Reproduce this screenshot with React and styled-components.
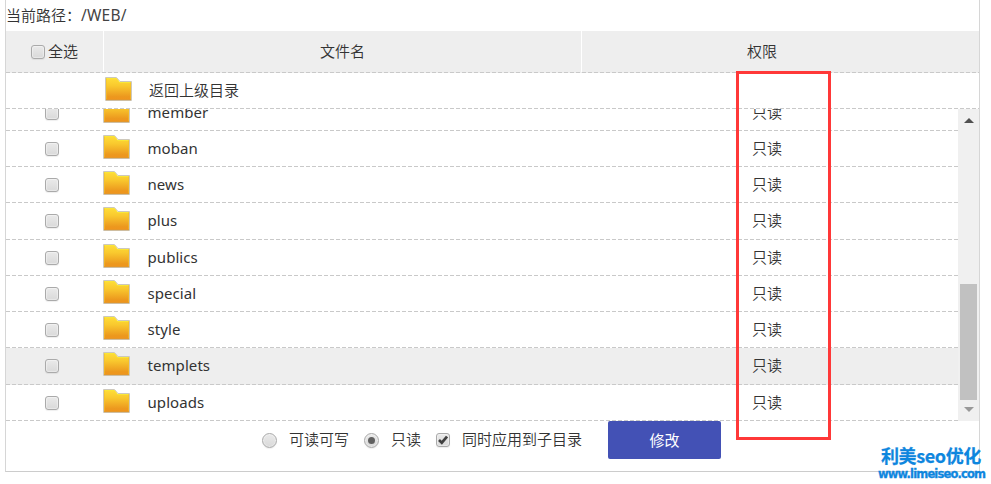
import React from "react";
import styled, { createGlobalStyle } from "styled-components";

const GlobalStyle = createGlobalStyle`
  * { box-sizing: border-box; }
  body {
    margin: 0;
    background: #fff;
    color: #333;
    font: 15px/20px "Noto Sans", "Noto Sans CJK SC", sans-serif;
    overflow: hidden;
  }
`;

const Page = styled.div`
  position: relative;
  width: 991px;
  height: 484px;
`;

const Panel = styled.main`
  display: flex;
  flex-direction: column;
  width: 975px;
  height: 472px;
  margin-left: 5px;
  border: solid #ccc;
  border-width: 0 1px 1px;
  border-left-color: #d6d6d6;
  border-right-color: #d6d6d6;
  font-weight: 350;
`;

const PathBar = styled.div`
  height: 31px;
  padding-top: 5px;
  white-space: nowrap;
`;

const PathValue = styled.span`
  font-size: 15.5px;
  font-weight: 400;
  color: #444;
  letter-spacing: 0.2px;
`;

const dashes = `
  background-image: repeating-linear-gradient(90deg, #c9c9c9 0 4px, transparent 4px 6px);
  background-size: 100% 1px;
  background-position: left bottom;
  background-repeat: no-repeat;
`;

const HeaderRow = styled.div`
  display: grid;
  grid-template-columns: 97px 1fr 398px;
  height: 42px;
  padding-bottom: 1px;
  background-color: #eee;
  ${dashes}
`;

const HeaderCell = styled.div`
  display: flex;
  align-items: center;
  justify-content: center;
  gap: 3px;
  padding-right: ${(p) => p.$pad || 0}px;
  & + & { border-left: 1px solid #fff; }
`;

const HeaderText = styled.span`
  padding-bottom: 2px;
`;

const ParentRow = styled.div`
  display: flex;
  height: 36px;
  padding: 4px 0 0 99px;
  ${dashes}
`;

const ListArea = styled.div`
  display: flex;
  height: 312px;
`;

const List = styled.div`
  display: flex;
  flex-direction: column;
  justify-content: flex-end;
  width: 952px;
  height: 312px;
  overflow: hidden;
`;

const FileRow = styled.div`
  display: grid;
  grid-template-columns: 39px 58px 44.5px 604.5px 1fr;
  flex: none;
  height: ${(p) => p.$height}px;
  padding-top: 4px;
  background-color: ${(p) => (p.$active ? "#eee" : "#fff")};
  ${dashes}
`;

const CheckSlot = styled.div`
  grid-column: 2;
  padding-top: 7px;
`;

const RowLabel = styled.span`
  display: block;
  padding-top: 3px;
  padding-left: ${(p) => p.$left || 0}px;
  font-weight: ${(p) => (p.$latin ? 400 : 350)};
  letter-spacing: ${(p) => (p.$latin ? 0.07 : 0)}px;
  white-space: nowrap;
`;

const CheckBox = styled.span`
  display: flex;
  align-items: center;
  justify-content: center;
  flex: none;
  width: 14px;
  height: 14px;
  border: 1px solid #aaa;
  border-radius: 3px;
  background: linear-gradient(#eaeaea, #d9d9d9);
  box-shadow: 0 1px 1px #0001, inset 0 0 1px 1px #fff6;
`;

const RadioButton = styled(CheckBox)`
  width: 15px;
  height: 15px;
  border-radius: 50%;
`;

const RadioDot = styled.span`
  width: 7px;
  height: 7px;
  border-radius: 50%;
  background: #606060;
`;

const ScrollTrack = styled.div`
  display: flex;
  flex-direction: column;
  justify-content: space-between;
  align-items: center;
  width: 21px;
  padding: 9px 0 9px;
  background: #f0f0f0;
`;

const ScrollThumb = styled.div`
  width: 17px;
  height: 116px;
  margin: auto 0 7px;
  background: #c1c1c1;
`;

const ArrowUp = styled.span`
  border: solid transparent;
  border-width: 0 5px 5px;
  border-bottom-color: #505050;
`;

const ArrowDown = styled.span`
  border: solid transparent;
  border-width: 5px 5px 0;
  border-top-color: #999;
`;

const Footer = styled.div`
  display: flex;
  height: 38px;
  padding-left: 256px;
`;

const Option = styled.label`
  display: flex;
  align-items: center;
  height: 38px;
  gap: 12px;
  margin-right: ${(p) => p.$after}px;
  white-space: nowrap;
`;

const OptionText = styled.span`
  padding-bottom: 2px;
`;

const SubmitButton = styled.button`
  width: 113px;
  height: 38px;
  padding: 0;
  border: 0;
  border-radius: 2px;
  background: #4351b5;
  color: #fff;
  font: inherit;
  font-weight: 400;
`;

const Highlight = styled.div`
  position: absolute;
  left: 736px;
  top: 71px;
  width: 95px;
  height: 369px;
  border: 3px solid #ff3838;
`;

const Watermark = styled.div`
  position: absolute;
  left: 878px;
  top: 444px;
  width: 109px;
  color: #0e86de;
  white-space: nowrap;
`;

const BrandName = styled.div`
  height: 23px;
  padding-left: 3px;
  font: 700 18px/23px "Noto Sans CJK SC", sans-serif;
  letter-spacing: -0.4px;
  -webkit-text-stroke: 0.25px #0e86de;
`;

const BrandUrl = styled.div`
  height: 14px;
  font: 700 11.5px/14px "DejaVu Sans", sans-serif;
  letter-spacing: -0.85px;
  -webkit-text-stroke: 0.3px #0e86de;
`;

function Folder() {
  return (
    <svg width="29" height="26" viewBox="0 0 29 26">
      <defs>
        <linearGradient id="folder" x1="0" y1="0" x2="0" y2="1">
          <stop offset="0" stopColor="#ffdd38" />
          <stop offset="0.35" stopColor="#f9c92e" />
          <stop offset="0.85" stopColor="#ec981e" />
          <stop offset="1" stopColor="#f0941d" />
        </linearGradient>
      </defs>
      <path d="M.5.5H11.5L15 4.5H26.5V23.5H.5Z" fill="none" stroke="#cdc8bc" />
      <path d="M1 1H11.3L14.8 5H26V23H1Z" fill="url(#folder)" />
      <path d="M1.5 22.5V1.5H11L14.5 5.5H25.5V22.5" fill="none" stroke="#f4c02a" strokeOpacity="0.6" />
      <path d="M1.5 1.5H11L14.5 5.5H25.5" fill="none" stroke="#f9e637" />
      <path d="M1 22.8H26" stroke="#d99a3a" strokeWidth="0.7" />
    </svg>
  );
}

const files = [
  { name: "member", height: 36 },
  { name: "moban", height: 36 },
  { name: "news", height: 36 },
  { name: "plus", height: 37 },
  { name: "publics", height: 36 },
  { name: "special", height: 36 },
  { name: "style", height: 36 },
  { name: "templets", height: 37, active: true },
  { name: "uploads", height: 36 },
];

export default function App() {
  return (
    <Page>
      <GlobalStyle />
      <Panel>
        <PathBar>当前路径：<PathValue>/WEB/</PathValue></PathBar>
        <HeaderRow>
          <HeaderCell><CheckBox /><HeaderText>全选</HeaderText></HeaderCell>
          <HeaderCell><HeaderText>文件名</HeaderText></HeaderCell>
          <HeaderCell $pad={37}><HeaderText>权限</HeaderText></HeaderCell>
        </HeaderRow>
        <ParentRow>
          <Folder />
          <RowLabel $left={15}>返回上级目录</RowLabel>
        </ParentRow>
        <ListArea>
          <List>
            {files.map((f) => (
              <FileRow key={f.name} $height={f.height} $active={f.active}>
                <CheckSlot><CheckBox /></CheckSlot>
                <Folder />
                <RowLabel $latin>{f.name}</RowLabel>
                <RowLabel>只读</RowLabel>
              </FileRow>
            ))}
          </List>
          <ScrollTrack>
            <ArrowUp />
            <ScrollThumb />
            <ArrowDown />
          </ScrollTrack>
        </ListArea>
        <Footer>
          <Option $after={15}><RadioButton /><OptionText>可读可写</OptionText></Option>
          <Option $after={15}>
            <RadioButton><RadioDot /></RadioButton>
            <OptionText>只读</OptionText>
          </Option>
          <Option $after={26}>
            <CheckBox>
              <svg width="10" height="10" viewBox="0 0 10 10">
                <path d="M1 5L3.8 7.7L9 1.5" fill="none" stroke="#404040" strokeWidth="2.7" />
              </svg>
            </CheckBox>
            <OptionText>同时应用到子目录</OptionText>
          </Option>
          <SubmitButton>修改</SubmitButton>
        </Footer>
      </Panel>
      <Highlight />
      <Watermark>
        <BrandName>利美seo优化</BrandName>
        <BrandUrl>www.limeiseo.com</BrandUrl>
      </Watermark>
    </Page>
  );
}
